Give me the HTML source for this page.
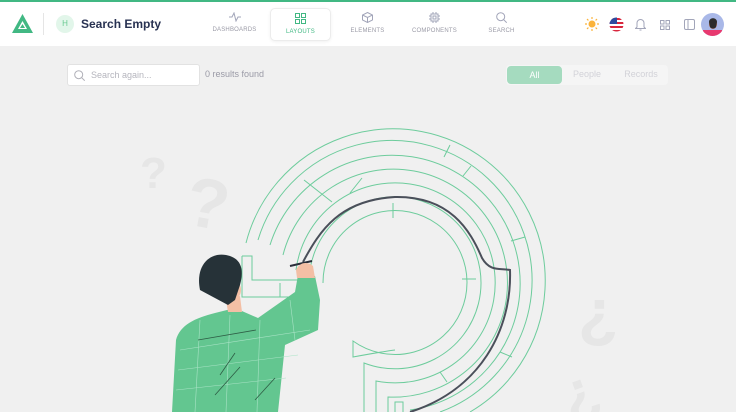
<!DOCTYPE html>
<html><head><meta charset="utf-8"><style>
*{margin:0;padding:0;box-sizing:border-box}
body{width:736px;height:412px;overflow:hidden;background:#f0f0f0;font-family:"Liberation Sans",sans-serif;position:relative}
.hdr{position:absolute;left:0;top:0;width:736px;height:46px;background:#fff;border-top:2px solid #41b883}
.t{position:absolute;text-align:center;font-size:6px;color:#9a9aa6;letter-spacing:.2px}
.tab{position:absolute;top:6px;height:33px;width:61px}
.tab svg{display:block;margin:4px auto 5px}
</style></head><body>
<div class="hdr">
 <svg style="position:absolute;left:12px;top:12px" width="21" height="20" viewBox="0 0 21 20"><path d="M10.5 0L21 19H0Z" fill="#41b883"/><path d="M10.5 7L15 15H6Z" fill="#fff"/><path d="M10.5 10L13 14H8Z" fill="#41b883"/></svg>
 <div style="position:absolute;left:43px;top:11px;width:1px;height:22px;background:#e5e5e5"></div>
 <div style="position:absolute;left:56px;top:13px;width:18px;height:18px;border-radius:50%;background:#e2f6ea;color:#69c991;font-size:8px;text-align:center;line-height:18px">H</div>
 <div style="position:absolute;left:81px;top:15px;font-size:12px;font-weight:bold;color:#283252">Search Empty</div>
 <div class="tab" style="left:204px"><svg width="12" height="10" viewBox="0 0 12 10"><path d="M0 5h3l2-4 2 8 2-4h3" fill="none" stroke="#a2a5b9" stroke-width="1"/></svg><div class="t" style="width:61px">DASHBOARDS</div></div>
 <div class="tab" style="left:270px;background:#fff;border:1px solid #ececec;border-radius:5px;box-shadow:0 1px 3px rgba(0,0,0,.06)"><svg width="11" height="11" viewBox="0 0 11 11" fill="none" stroke="#41b883"><rect x=".5" y=".5" width="4" height="4"/><rect x="6.5" y=".5" width="4" height="4"/><rect x=".5" y="6.5" width="4" height="4"/><rect x="6.5" y="6.5" width="4" height="4"/></svg><div class="t" style="width:59px;color:#41b883">LAYOUTS</div></div>
 <div class="tab" style="left:337px"><svg width="11" height="11" viewBox="0 0 11 11" fill="none" stroke="#a2a5b9"><path d="M5.5.5l5 2.5v5l-5 2.5-5-2.5v-5zM.5 3l5 2.5 5-2.5M5.5 5.5v5"/></svg><div class="t" style="width:61px">ELEMENTS</div></div>
 <div class="tab" style="left:404px"><svg width="11" height="11" viewBox="0 0 11 11" fill="none" stroke="#a2a5b9"><rect x="2" y="2" width="7" height="7"/><rect x="4" y="4" width="3" height="3"/><path d="M4 0v2M7 0v2M4 9v2M7 9v2M0 4h2M0 7h2M9 4h2M9 7h2"/></svg><div class="t" style="width:61px">COMPONENTS</div></div>
 <div class="tab" style="left:471px"><svg width="11" height="11" viewBox="0 0 11 11" fill="none" stroke="#a2a5b9"><circle cx="4.7" cy="4.7" r="4"/><path d="M7.7 7.7l3 3"/></svg><div class="t" style="width:61px">SEARCH</div></div>
 <svg style="position:absolute;left:585px;top:15px" width="14" height="14" viewBox="0 0 14 14"><circle cx="7" cy="7" r="3.5" fill="#fbb33b"/><g stroke="#fbb33b" stroke-width="1.2"><path d="M7 0v2M7 12v2M0 7h2M12 7h2M2 2l1.4 1.4M10.6 10.6L12 12M2 12l1.4-1.4M10.6 3.4L12 2"/></g></svg>
 <svg style="position:absolute;left:609px;top:15px" width="15" height="15" viewBox="0 0 15 15"><clipPath id="c"><circle cx="7.5" cy="7.5" r="7"/></clipPath><g clip-path="url(#c)"><rect width="15" height="15" fill="#fff"/><g fill="#d8263d"><rect y="1" width="15" height="2"/><rect y="5" width="15" height="2"/><rect y="9" width="15" height="2"/><rect y="13" width="15" height="2"/></g><rect width="8" height="7" fill="#2d4a9e"/></g></svg>
 <svg style="position:absolute;left:635px;top:16px" width="11" height="13" viewBox="0 0 11 13" fill="none" stroke="#a2a5b9"><path d="M2 9V5a3.5 3.5 0 017 0v4l1.5 1.5h-10zM4.5 12h2"/></svg>
 <svg style="position:absolute;left:660px;top:18px" width="10" height="10" viewBox="0 0 10 10" fill="none" stroke="#a2a5b9"><rect x=".5" y=".5" width="3.5" height="3.5"/><rect x="6" y=".5" width="3.5" height="3.5"/><rect x=".5" y="6" width="3.5" height="3.5"/><rect x="6" y="6" width="3.5" height="3.5"/></svg>
 <svg style="position:absolute;left:684px;top:17px" width="11" height="11" viewBox="0 0 11 11" fill="none" stroke="#a2a5b9"><rect x=".5" y=".5" width="10" height="10" rx="1.5"/><path d="M4 .5v10"/></svg>
 <svg style="position:absolute;left:701px;top:11px" width="23" height="23" viewBox="0 0 23 23"><clipPath id="a"><circle cx="11.5" cy="11.5" r="11.5"/></clipPath><g clip-path="url(#a)"><rect width="23" height="23" fill="#a9b8e8"/><rect x="2" y="17" width="19" height="8" fill="#e8396f"/><ellipse cx="12" cy="11" rx="4" ry="5" fill="#b86a4b"/><path d="M8 9c0-5 8-5 8 0l-1 5c-1 2-5 2-6 0z" fill="#2c2c2c"/></g></svg>
</div>
<div style="position:absolute;left:67px;top:64px;width:133px;height:22px;background:#fff;border:1px solid #e2e2e2;border-radius:3px">
 <svg style="position:absolute;left:6px;top:5px" width="11" height="11" viewBox="0 0 11 11" fill="none" stroke="#b0b0b8"><circle cx="4.7" cy="4.7" r="4"/><path d="M7.7 7.7l3 3"/></svg>
 <span style="position:absolute;left:23px;top:5px;font-size:9px;color:#b5b5bd">Search again...</span>
</div>
<div style="position:absolute;left:205px;top:69px;font-size:9px;color:#9a9aa6">0 results found</div>
<div style="position:absolute;left:506px;top:65px;width:162px;height:20px;background:#f5f5f5;border-radius:4px"></div>
<div style="position:absolute;left:507px;top:66px;width:55px;height:18px;background:#a5dbbf;border-radius:4px;color:#fff;font-size:9px;text-align:center;line-height:18px">All</div>
<div style="position:absolute;left:564px;top:69px;width:46px;font-size:9px;color:#d2d2d8;text-align:center">People</div>
<div style="position:absolute;left:614px;top:69px;width:54px;font-size:9px;color:#d2d2d8;text-align:center">Records</div>

<svg style="position:absolute;left:0;top:0" width="736" height="412" viewBox="0 0 736 412">
 <g font-family="Liberation Sans" font-weight="bold" fill="#e6e6e6">
  <text x="140" y="188" font-size="44">?</text>
  <text x="187" y="228" font-size="70" transform="rotate(10 210 200)">?</text>
  <text x="578" y="335" font-size="66">¿</text>
  <text x="560" y="412" font-size="60" transform="rotate(-20 580 390)">¿</text>
 </g>
 <g fill="none" stroke="#6dcc9c" stroke-width="1">
  <path d="M323 283A72 72 0 1 1 353 341L353 357Q380 352 395 350"/>
  <path d="M309 283A86 86 0 1 1 364 363L364 412"/>
  <path d="M296 270A100 100 0 1 1 376 381L376 412"/>
  <path d="M283 255A114 114 0 1 1 388 397L388 412"/>
  <path d="M270 245A128 128 0 1 1 410 410"/>
  <path d="M258 240A140 140 0 1 1 440 412"/>
  <path d="M246 243A152 152 0 1 1 470 412"/>
  <path d="M242 256h10v24h60M242 256v41h70M280 283v14M393 203v15M462 279h14M450 145l-6 12M525 237l-14 4M471 166l-8 10M304 180l28 22M362 178l-12 15M440 372l7 10M500 352l12 5M395 412v-10h8v10"/>
 </g>
 <path d="M303 262C320 230 340 200 395 197C450 196 470 230 482 258C490 272 500 268 510 270C512 330 480 390 410 412" fill="none" stroke="#4a4f5a" stroke-width="2"/>
 <path d="M290 266l22-5" stroke="#2a2f3a" stroke-width="2"/>
 <path d="M176 340C180 325 195 318 215 313L235 308L258 318L295 292L298 275L315 276L320 300L318 330L285 345L278 412H172Z" fill="#63c690"/>
 <path d="M296 270c3-8 12-9 17-4l2 12h-18z" fill="#f3bfa5"/>
 <path d="M226 300l2 12h14l-2-16z" fill="#f3bfa5"/>
 <ellipse cx="236" cy="290" rx="5" ry="8" fill="#f3bfa5"/>
 <path d="M200 290C195 265 210 252 226 255C242 258 244 270 240 285L235 300L228 305Z" fill="#263238"/>
 <g stroke="#a9e3c6" stroke-width=".6" fill="none"><path d="M180 350l130-20M178 370l120-15M176 390l110-12M200 320l-5 92M230 315l-4 97M260 320l-3 92M290 300l5 40"/></g>
 <g stroke="#2e5d45" stroke-width=".8" fill="none"><path d="M198 340l58-10M220 375l15-22M215 395l25-28M255 400l20-22"/></g>
</svg>
</body></html>
